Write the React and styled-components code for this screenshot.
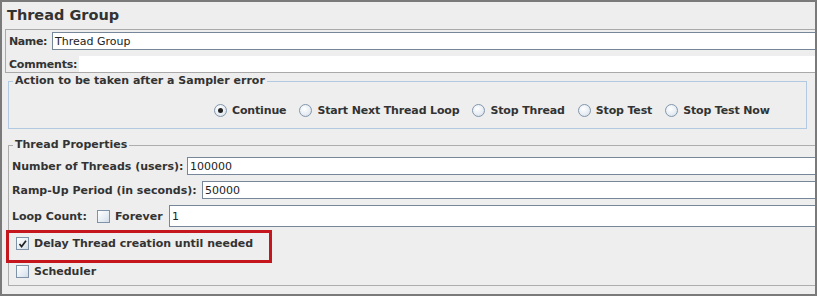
import React from "react";
import styled, { createGlobalStyle } from "styled-components";

const Global = createGlobalStyle`
  html, body { margin: 0; padding: 0; background: #eeeeee; }
  body { font-family: "DejaVu Sans", "Liberation Sans", sans-serif; }
`;

const Frame = styled.div`
  width: 817px;
  height: 296px;
  box-sizing: border-box;
  border: 2px solid #7a7a7a;
  background: #eeeeee;
  overflow: hidden;
  display: flex;
  flex-direction: column;
  color: #333;
  font-family: "DejaVu Sans", "Liberation Sans", sans-serif;
`;

const Title = styled.h1`
  flex: none;
  margin: 0;
  height: 27px;
  line-height: 27px;
  padding-left: 5px;
  font-size: 14.5px;
  font-weight: bold;
  color: #333;
`;

const NameBox = styled.div`
  flex: none;
  margin-left: 3px;
  width: 840px;
  height: 44px;
  box-sizing: border-box;
  border: 1px solid #a9a9a9;
  padding: 2px 0 0 3px;
  display: flex;
  flex-direction: column;
  gap: 6px;
`;

const FieldRow = styled.div`
  display: flex;
  align-items: center;
  height: ${(p) => p.$h || 18}px;
  gap: ${(p) => p.$gap || 0}px;
  padding-left: ${(p) => p.$pl || 0}px;
  position: relative;
`;

const Label = styled.span`
  flex: none;
  font-size: 11px;
  font-weight: bold;
  color: #333;
  white-space: nowrap;
  letter-spacing: ${(p) => p.$ls || 0}px;
  width: ${(p) => (p.$w ? `${p.$w}px` : "auto")};
  margin-left: ${(p) => p.$ml || 0}px;
`;

const TextField = styled.div`
  flex: 1;
  align-self: stretch;
  box-sizing: border-box;
  background: #fff;
  border: 1px solid #76879a;
  border-right: none;
  padding-left: 2px;
  font-size: 11px;
  color: #222;
  display: flex;
  align-items: center;
  white-space: nowrap;
`;

const CommentArea = styled.div`
  flex: 1;
  align-self: stretch;
  background: #fff;
`;

const Group = styled.fieldset`
  flex: none;
  margin: ${(p) => p.$mt}px 0 0 6px;
  padding: 0;
  min-width: 0;
  width: ${(p) => p.$w}px;
  height: ${(p) => p.$h}px;
  box-sizing: border-box;
  border: 1px solid ${(p) => p.$color};
`;

const Legend = styled.legend`
  margin-left: 4px;
  padding: 0 2px;
  font-size: 11px;
  font-weight: bold;
  line-height: 14px;
  color: #333;
`;

const RadioRow = styled.div`
  height: 40px;
  box-sizing: border-box;
  padding: 4px 0 0 205px;
  display: flex;
  align-items: center;
  gap: 13px;
`;

const Choice = styled.label`
  display: flex;
  align-items: center;
  gap: 5px;
  font-size: 11px;
  font-weight: bold;
  letter-spacing: -0.15px;
  color: #333;
  white-space: nowrap;
`;

const RadioCircle = styled.span`
  flex: none;
  width: 13px;
  height: 13px;
  border-radius: 50%;
  box-sizing: border-box;
  border: 1px solid #8296ab;
  background: radial-gradient(circle at 40% 35%, #ffffff 0%, #e8eef4 55%, #cdd8e4 100%);
  display: inline-flex;
  align-items: center;
  justify-content: center;
  &::after {
    content: "";
    display: ${(p) => (p.$on ? "block" : "none")};
    width: 5px;
    height: 5px;
    border-radius: 50%;
    background: #232323;
  }
`;

const Check = styled.span`
  flex: none;
  width: 13px;
  height: 13px;
  box-sizing: border-box;
  border: 1px solid #7f93a8;
  background: linear-gradient(135deg, #ffffff 0%, #e6edf4 60%, #d3dde8 100%);
  display: inline-flex;
  align-items: center;
  justify-content: center;
`;

const Stack = styled.div`
  box-sizing: border-box;
  padding: 5px 0 2px 3px;
  display: flex;
  flex-direction: column;
  gap: 6px;
`;

const Highlight = styled.span`
  position: absolute;
  left: -6px;
  top: -3px;
  width: 266px;
  height: 33px;
  box-sizing: border-box;
  border: 3px solid #c4161c;
  pointer-events: none;
`;

const CheckBox = ({ on }) => (
  <Check>
    {on && (
      <svg width="9" height="9" viewBox="0 0 9 9">
        <path d="M1.5 5 L3.6 7.6 L8 1.8" fill="none" stroke="#222" strokeWidth="1.7" />
      </svg>
    )}
  </Check>
);

const radios = [
  ["Continue", true],
  ["Start Next Thread Loop", false],
  ["Stop Thread", false],
  ["Stop Test", false],
  ["Stop Test Now", false],
];

export default function App() {
  return (
    <>
      <Global />
      <Frame>
        <Title>Thread Group</Title>
        <NameBox>
          <FieldRow $h={18}>
            <Label $w={43} $ls={-0.4}>Name:</Label>
            <TextField>Thread Group</TextField>
          </FieldRow>
          <FieldRow $h={16}>
            <Label $w={70} $ls={-0.2}>Comments:</Label>
            <CommentArea />
          </FieldRow>
        </NameBox>

        <Group $mt={1} $w={799} $h={55} $color="#b1c9e1">
          <Legend>Action to be taken after a Sampler error</Legend>
          <RadioRow>
            {radios.map(([t, on]) => (
              <Choice key={t}>
                <RadioCircle $on={on} />
                {t}
              </Choice>
            ))}
          </RadioRow>
        </Group>

        <Group $mt={9} $w={840} $h={148} $color="#adadad">
          <Legend>Thread Properties</Legend>
          <Stack>
            <FieldRow $h={18}>
              <Label $w={175}>Number of Threads (users):</Label>
              <TextField>100000</TextField>
            </FieldRow>
            <FieldRow $h={18}>
              <Label $w={190}>Ramp-Up Period (in seconds):</Label>
              <TextField>50000</TextField>
            </FieldRow>
            <FieldRow $h={22}>
              <Label $w={85}>Loop Count:</Label>
              <CheckBox on={false} />
              <Label $w={54} $ml={5}>Forever</Label>
              <TextField>1</TextField>
            </FieldRow>
            <FieldRow $h={21} $pl={4} $gap={5}>
              <Highlight />
              <CheckBox on />
              <Label>Delay Thread creation until needed</Label>
            </FieldRow>
            <FieldRow $h={22} $pl={4} $gap={5}>
              <CheckBox on={false} />
              <Label>Scheduler</Label>
            </FieldRow>
          </Stack>
        </Group>
      </Frame>
    </>
  );
}
